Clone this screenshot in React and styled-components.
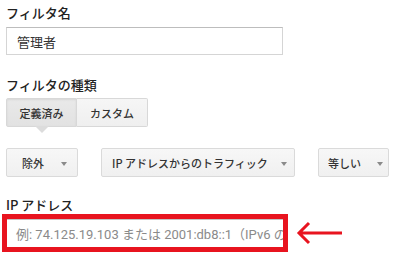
import styled, { createGlobalStyle } from "styled-components";

const Global = createGlobalStyle`
  html, body {
    margin: 0;
    background: #fff;
  }
  body {
    font-family: "Noto Sans CJK JP", Roboto, sans-serif;
    color: #333;
  }
`;

const Page = styled.div`
  width: 402px;
  height: 273px;
  padding: 5px 0 0 6px;
  box-sizing: border-box;
  overflow: hidden;
`;

const Label = styled.div`
  font-size: 13px;
  line-height: 16px;
  font-weight: 500;
  color: #222;
  margin-top: ${(p) => p.$top || 0}px;
`;

const TextBox = styled.div`
  box-sizing: border-box;
  width: 277px;
  height: 28px;
  margin-top: 6px;
  border: 1px solid #d5d5d5;
  border-top-color: #bdbdbd;
  padding: 0 10px;
  display: flex;
  align-items: center;
  font-size: 13px;
  color: #333;
`;

const Group = styled.div`
  display: flex;
  margin-top: 5px;
`;

const SegButton = styled.div`
  position: relative;
  box-sizing: border-box;
  width: 71px;
  height: 29px;
  display: flex;
  align-items: center;
  justify-content: center;
  font-size: 11px;
  font-weight: 500;
  color: #333;
  white-space: nowrap;
  border: 1px solid #d8d8d8;
  background: ${(p) =>
    p.$active
      ? "linear-gradient(#e9e9e9, #e2e2e2)"
      : "linear-gradient(#f6f6f6, #efefef)"};
  box-shadow: ${(p) => (p.$active ? "inset 0 1px 2px rgba(0,0,0,0.08)" : "none")};
  & + & {
    border-left: none;
  }
  border-radius: ${(p) => (p.$first ? "2px 0 0 2px" : "0 2px 2px 0")};
`;

const Pointer = styled.span`
  position: absolute;
  left: 50%;
  bottom: -7px;
  margin-left: -7px;
  width: 0;
  height: 0;
  border-left: 7px solid transparent;
  border-right: 7px solid transparent;
  border-top: 7px solid #dcdcdc;
`;

const DropRow = styled.div`
  display: flex;
  gap: 23px;
  margin-top: 21px;
`;

const Dropdown = styled.div`
  box-sizing: border-box;
  width: ${(p) => p.$w}px;
  height: 29px;
  display: flex;
  align-items: center;
  gap: ${(p) => p.$gap}px;
  padding-left: ${(p) => p.$pad}px;
  font-size: 11px;
  font-weight: 500;
  color: #333;
  white-space: nowrap;
  border: 1px solid #dadada;
  border-radius: 2px;
  background: linear-gradient(#f7f7f7, #f0f0f0);
`;

const Caret = styled.span`
  flex: none;
  width: 0;
  height: 0;
  border-left: 3.5px solid transparent;
  border-right: 3.5px solid transparent;
  border-top: 4px solid #8a8a8a;
  margin-top: 2px;
`;

const AddressRow = styled.div`
  display: flex;
  align-items: center;
  gap: 8px;
  margin-top: 1px;
  margin-left: -4px;
`;

const Highlight = styled.div`
  box-sizing: border-box;
  width: 286px;
  height: 38px;
  border: 5px solid #e8141f;
`;

const AddressInput = styled.div`
  box-sizing: border-box;
  height: 100%;
  border-top: 1px solid #c4c4c4;
  padding: 0 0 0 9px;
  display: flex;
  align-items: center;
  font-family: Roboto, "Noto Sans CJK JP", sans-serif;
  font-size: 13px;
  color: #8a8a8a;
  white-space: nowrap;
  overflow: hidden;
`;

const Arrow = () => (
  <svg width="47" height="24" viewBox="0 0 47 24">
    <path
      d="M46 12 H3 M13 2 L3 12 L13 22"
      fill="none"
      stroke="#e8141f"
      strokeWidth="3"
    />
  </svg>
);

const App = () => {
  return (
    <Page>
      <Global />
      <Label>フィルタ名</Label>
      <TextBox>管理者</TextBox>

      <Label $top={22}>フィルタの種類</Label>
      <Group>
        <SegButton $active $first>
          定義済み
          <Pointer />
        </SegButton>
        <SegButton>カスタム</SegButton>
      </Group>

      <DropRow>
        <Dropdown $w={72} $pad={15} $gap={17}>
          除外<Caret />
        </Dropdown>
        <Dropdown $w={194} $pad={10} $gap={13}>
          IP アドレスからのトラフィック<Caret />
        </Dropdown>
        <Dropdown $w={71} $pad={9} $gap={16}>
          等しい<Caret />
        </Dropdown>
      </DropRow>

      <Label $top={20}>IP アドレス</Label>
      <AddressRow>
        <Highlight>
          <AddressInput>例: 74.125.19.103 または 2001:db8::1（IPv6 の場合）</AddressInput>
        </Highlight>
        <Arrow />
      </AddressRow>
    </Page>
  );
};

export default App;
